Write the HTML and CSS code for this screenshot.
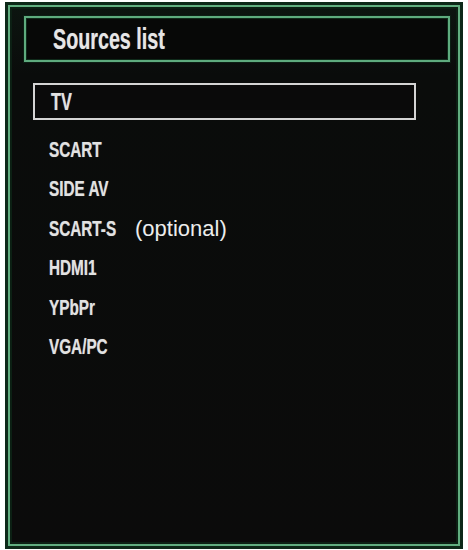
FILE: index.html
```html
<!DOCTYPE html>
<html>
<head>
<meta charset="utf-8">
<link rel="stylesheet" href="styles.css">
</head>
<body>
<div class="panel">
  <div class="title-box"><span class="cond title">Sources list</span></div>
  <div class="selected"><span class="cond">TV</span></div>
  <ul class="list">
    <li><span class="cond">SCART</span></li>
    <li><span class="cond">SIDE AV</span></li>
    <li><span class="label"><span class="cond">SCART-S</span></span><span class="note">(optional)</span></li>
    <li><span class="cond">HDMI1</span></li>
    <li><span class="cond">YPbPr</span></li>
    <li><span class="cond">VGA/PC</span></li>
  </ul>
</div>
</body>
</html>
```
FILE: styles.css
```css
html, body {
  margin: 0;
  padding: 0;
  background: #ffffff;
}
body {
  width: 468px;
  height: 550px;
  overflow: hidden;
  font-family: "Liberation Sans", Arial, sans-serif;
}
.panel {
  box-sizing: border-box;
  margin: 2px 5px 0 5px;
  width: 458px;
  height: 547px;
  border: 3px solid #0d2818;
  box-shadow: inset 0 0 0 2px #62ae80, inset 0 0 0 4px #0c2014;
  background: linear-gradient(#0c1510 0px, #0a0c0b 70px, #0b0b0b 100%);
  padding: 11px 10px 0 16px;
  display: flex;
  flex-direction: column;
}
.title-box {
  height: 46px;
  box-sizing: border-box;
  border: 2px solid #5eab7e;
  background: #070807;
  box-shadow: inset 0 0 0 1px #0f2a1a, 0 0 0 1px #0c1f14;
  padding-left: 27px;
  line-height: 42px;
  font-size: 29px;
}
.cond {
  display: inline-block;
  font-weight: bold;
  color: #e2e2e2;
  transform: scaleX(0.68);
  transform-origin: 0 50%;
  white-space: nowrap;
  text-shadow: 0 0 1px rgba(255,255,255,0.45);
}
.title {
  color: #e6e6e6;
}
.selected {
  margin: 21px 34px 0 9px;
  height: 37px;
  box-sizing: border-box;
  border: 2px solid #d4d4d4;
  background: #0a0a0a;
  padding-left: 16px;
  font-size: 24px;
  line-height: 33px;
}
.list {
  list-style: none;
  margin: 10px 0 0 0;
  padding: 0 0 0 25px;
  font-size: 22.5px;
}
.list li {
  height: 39.4px;
  line-height: 40px;
  white-space: nowrap;
}
.label {
  display: inline-block;
  width: 86px;
}
.note {
  color: #ececec;
  font-weight: normal;
  font-size: 22px;
}
```
